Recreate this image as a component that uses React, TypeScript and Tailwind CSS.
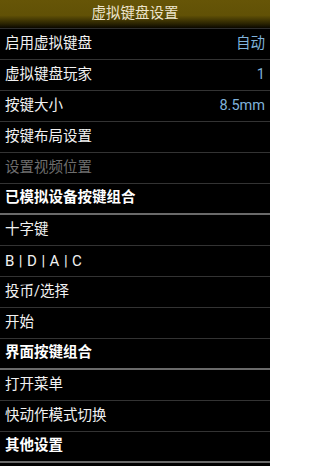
import React from "react";

type Row = { label: string; value?: string; kind?: "normal" | "disabled" | "section" };

const rows: Row[] = [
  { label: "启用虚拟键盘", value: "自动" },
  { label: "虚拟键盘玩家", value: "1" },
  { label: "按键大小", value: "8.5mm" },
  { label: "按键布局设置" },
  { label: "设置视频位置", kind: "disabled" },
  { label: "已模拟设备按键组合", kind: "section" },
  { label: "十字键" },
  { label: "B | D | A | C" },
  { label: "投币/选择" },
  { label: "开始" },
  { label: "界面按键组合", kind: "section" },
  { label: "打开菜单" },
  { label: "快动作模式切换" },
  { label: "其他设置", kind: "section" },
];

export default function App() {
  return (
    <div
      className="w-[270px] h-[466px] bg-black overflow-hidden flex flex-col"
      style={{ fontFamily: 'Roboto, "Noto Sans CJK SC", "Noto Sans", sans-serif' }}
    >
      <div className="h-[28px] flex items-center justify-center bg-[linear-gradient(to_bottom,#665507_0%,#615106_55%,#2a2302_85%,#0a0800_100%)]">
        <span className="text-[14.5px] text-[#ece4cc] leading-none">虚拟键盘设置</span>
      </div>
      <div className="h-[1px] bg-[#2e2e2e]" />
      {rows.map((r, i) => {
        const section = r.kind === "section";
        const latin = r.label.startsWith("B |");
        return (
          <div
            key={i}
            className={
              section
                ? "h-[31px] flex items-center justify-between px-[5px] border-b-2 border-[#6a6a6a]"
                : "h-[31px] flex items-center justify-between px-[5px] border-b border-[#333333]"
            }
          >
            <span
              className={
                r.kind === "disabled"
                  ? "text-[14.5px] text-[#6e6e6e] leading-none"
                  : section
                  ? "text-[14.5px] text-white font-bold leading-none"
                  : latin
                  ? "text-[15px] text-[#f2f2f2] leading-none tracking-[0.4px]"
                  : "text-[14.5px] text-[#f2f2f2] leading-none"
              }
            >
              {r.label}
            </span>
            {r.value && (
              <span className="text-[14.5px] text-[#7fb2da] leading-none">{r.value}</span>
            )}
          </div>
        );
      })}
    </div>
  );
}
